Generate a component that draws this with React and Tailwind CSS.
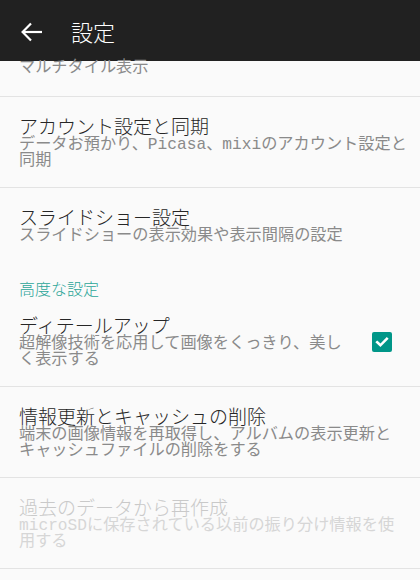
import React from "react";

const jp = { fontFamily: '"Noto Sans CJK JP", sans-serif' };
const sub = { fontFamily: '"Liberation Mono", "Noto Sans CJK JP", monospace' };

function Row({ title, lines, disabled, right }) {
  return (
    <div className="flex items-center border-b border-[#e3e3e3] pl-[19px] pr-[9px] pt-[17px] pb-[18px]">
      <div className="flex-1 min-w-0">
        <div
          style={jp}
          className={`text-[19px] leading-[23px] font-light whitespace-nowrap ${disabled ? "text-[#c9c9c9]" : "text-[#262626]"}`}
        >
          {title}
        </div>
        {lines.map((l, i) => (
          <div
            key={i}
            style={sub}
            className={`text-[16.2px] leading-[16px] whitespace-nowrap ${disabled ? "text-[#d6d6d6]" : "text-[#8a8a8a]"}`}
          >
            {l}
          </div>
        ))}
      </div>
      {right}
    </div>
  );
}

export default function App() {
  return (
    <div className="w-[420px] h-[580px] bg-[#fafafa] overflow-hidden flex flex-col">
      <div className="h-[61px] shrink-0 bg-[#212121] flex items-center">
        <svg
          width="22"
          height="20"
          viewBox="0 0 22 20"
          className="ml-[21px] mt-[2px]"
          fill="none"
          stroke="white"
          strokeWidth="2.2"
        >
          <path d="M21 10H2" />
          <path d="M10 1.5L1.6 10L10 18.5" />
        </svg>
        <div style={jp} className="ml-[28px] text-[22px] leading-[26px] font-light text-white">
          設定
        </div>
      </div>

      <div className="h-[36px] shrink-0 border-b border-[#e3e3e3] pl-[19px]">
        <div style={sub} className="text-[16.2px] leading-[16px] text-[#8a8a8a] -mt-[1px] whitespace-nowrap">
          マルチタイル表示
        </div>
      </div>

      <Row title="アカウント設定と同期" lines={["データお預かり、Picasa、mixiのアカウント設定と", "同期"]} />

      <div className="pl-[19px] pt-[17px] pb-[17px]">
        <div style={jp} className="text-[19px] leading-[23px] font-light text-[#262626] whitespace-nowrap">
          スライドショー設定
        </div>
        <div style={sub} className="text-[16.2px] leading-[16px] text-[#8a8a8a] whitespace-nowrap">
          スライドショーの表示効果や表示間隔の設定
        </div>
      </div>

      <div className="pl-[19px] pt-[19px]">
        <div style={jp} className="text-[16px] leading-[16px] font-light text-[#2aa598]">
          高度な設定
        </div>
      </div>

      <Row
        title="ディテールアップ"
        lines={["超解像技術を応用して画像をくっきり、美し", "く表示する"]}
        right={
          <div className="w-[20px] h-[20px] rounded-[2px] bg-[#009688] flex items-center justify-center shrink-0 mt-[2px] mr-[19px]">
            <svg width="16" height="16" viewBox="0 0 16 16" fill="none" stroke="white" strokeWidth="2.6" strokeLinecap="square">
              <path d="M3.2 8.3L6.4 11.3L12.8 4.8" />
            </svg>
          </div>
        }
      />

      <Row
        title="情報更新とキャッシュの削除"
        lines={["端末の画像情報を再取得し、アルバムの表示更新と", "キャッシュファイルの削除をする"]}
      />

      <Row
        title="過去のデータから再作成"
        disabled
        lines={["microSDに保存されている以前の振り分け情報を使", "用する"]}
      />
    </div>
  );
}
